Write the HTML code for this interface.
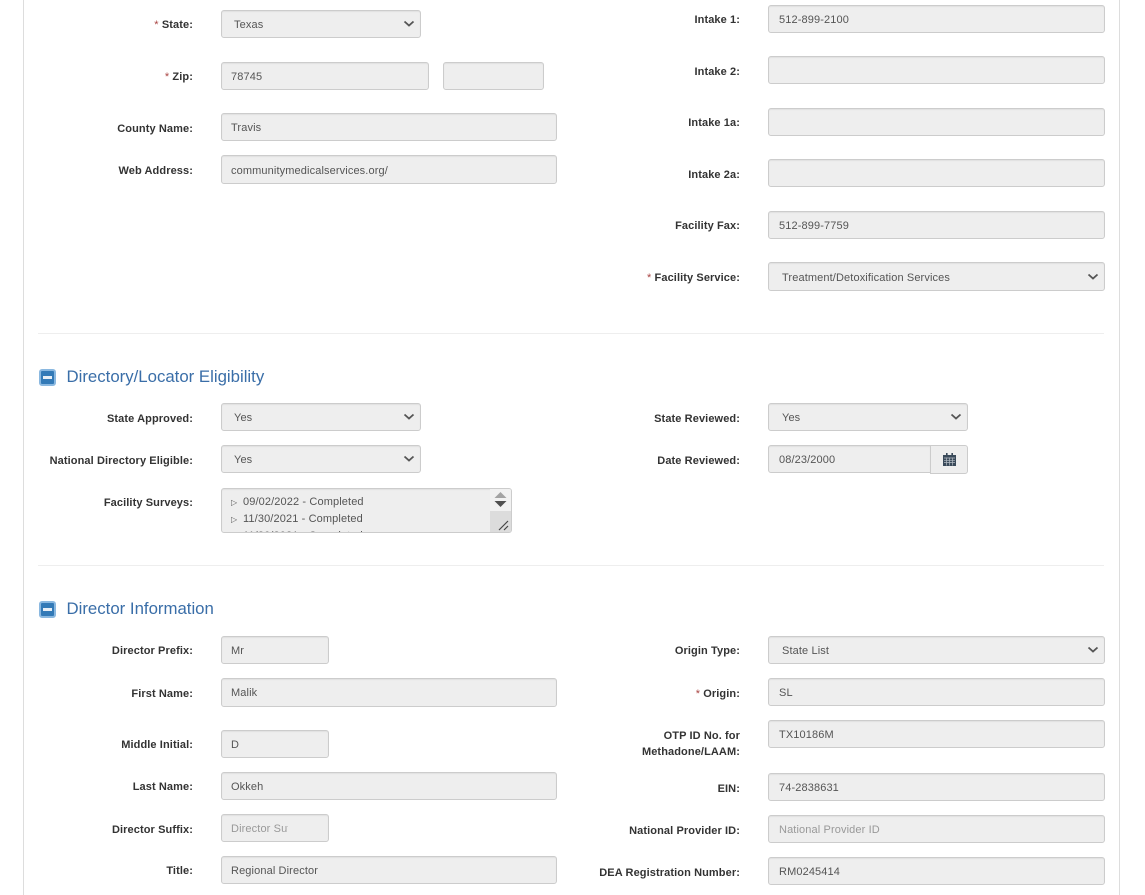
<!DOCTYPE html>
<html><head><meta charset="utf-8">
<style>
html,body{margin:0;padding:0;background:#fff;width:1145px;height:895px;overflow:hidden}
body{position:relative;font-family:"Liberation Sans",sans-serif;font-size:11px;color:#555;letter-spacing:.12px}
.p{position:absolute}
.f{position:absolute;box-sizing:border-box;background:#eee;border:1px solid #ccc;border-radius:3px;box-shadow:inset 0 1px 1px rgba(0,0,0,.06);padding-left:9px;padding-top:2px;color:#555;white-space:nowrap;overflow:hidden;display:flex;align-items:center}
.s{padding-left:12px}
.ph{color:#999}
.l{position:absolute;text-align:right;font-weight:bold;color:#333;white-space:nowrap;line-height:16px;transform:translateY(1px);letter-spacing:.1px}
.r{color:#a94442;font-weight:normal}
.hr{position:absolute;left:38px;width:1066px;height:1px;background:#eee}
.h{position:absolute;left:66.5px;font-size:16.8px;letter-spacing:0;color:#3a6ea8;line-height:20px;white-space:nowrap}
.ic{position:absolute;left:39px;width:17px;height:17px;box-sizing:border-box;background:#337ab7;border:2px solid #8ab8e0;border-radius:3px}
.ic:after{content:"";position:absolute;left:2px;top:5px;width:9px;height:3px;background:#e8eff6}
.c{position:absolute;right:5px;top:50%;margin-top:-4px}
</style></head><body>
<div class="p" style="left:23px;top:0;width:1px;height:895px;background:#ddd"></div>
<div class="p" style="left:1119px;top:0;width:1px;height:895px;background:#ddd"></div>

<div class="l" style="right:952px;top:16px"><span class="r">*</span> State:</div>
<div class="f s" style="left:221px;top:10px;width:200px;height:28px">Texas<svg class="c" width="12" height="8" viewBox="0 0 12 8"><path d="M1.5 1.5l4.500 4 4.500-4" fill="none" stroke="#555" stroke-width="1.800"/></svg></div>
<div class="l" style="right:952px;top:68px"><span class="r">*</span> Zip:</div>
<div class="f" style="left:221px;top:62px;width:208px;height:28px">78745</div>
<div class="f" style="left:443px;top:62px;width:101px;height:28px"></div>
<div class="l" style="right:952px;top:120px">County Name:</div>
<div class="f" style="left:221px;top:113px;width:336px;height:28px">Travis</div>
<div class="l" style="right:952px;top:162px">Web Address:</div>
<div class="f" style="left:221px;top:155px;width:336px;height:29px">communitymedicalservices.org/</div>

<div class="l" style="right:405px;top:11px">Intake 1:</div>
<div class="f" style="left:768px;top:5px;width:337px;height:28px;padding-left:10px">512-899-2100</div>
<div class="l" style="right:405px;top:63px">Intake 2:</div>
<div class="f" style="left:768px;top:56px;width:337px;height:28px"></div>
<div class="l" style="right:405px;top:114px">Intake 1a:</div>
<div class="f" style="left:768px;top:108px;width:337px;height:28px"></div>
<div class="l" style="right:405px;top:166px">Intake 2a:</div>
<div class="f" style="left:768px;top:159px;width:337px;height:28px"></div>
<div class="l" style="right:405px;top:217px">Facility Fax:</div>
<div class="f" style="left:768px;top:211px;width:337px;height:28px;padding-left:10px">512-899-7759</div>
<div class="l" style="right:405px;top:269px"><span class="r">*</span> Facility Service:</div>
<div class="f s" style="left:768px;top:262px;width:337px;height:29px;padding-left:13px">Treatment/Detoxification Services<svg class="c" width="12" height="8" viewBox="0 0 12 8"><path d="M1.5 1.5l4.500 4 4.500-4" fill="none" stroke="#555" stroke-width="1.800"/></svg></div>

<div class="hr" style="top:333px"></div>
<div class="ic" style="top:369px"></div>
<div class="h" style="top:367px">Directory/Locator Eligibility</div>

<div class="l" style="right:952px;top:410px">State Approved:</div>
<div class="f s" style="left:221px;top:403px;width:200px;height:28px">Yes<svg class="c" width="12" height="8" viewBox="0 0 12 8"><path d="M1.5 1.5l4.500 4 4.500-4" fill="none" stroke="#555" stroke-width="1.800"/></svg></div>
<div class="l" style="right:952px;top:452px">National Directory Eligible:</div>
<div class="f s" style="left:221px;top:445px;width:200px;height:28px">Yes<svg class="c" width="12" height="8" viewBox="0 0 12 8"><path d="M1.5 1.5l4.500 4 4.500-4" fill="none" stroke="#555" stroke-width="1.800"/></svg></div>
<div class="l" style="right:952px;top:494px">Facility Surveys:</div>
<div class="f" style="left:221px;top:488px;width:291px;height:45px;display:block;padding:0">
  <div class="p" style="left:9px;top:5px;line-height:17px;white-space:nowrap"><span style="font-size:8px;display:inline-block;width:12px">▷</span>09/02/2022 - Completed<br><span style="font-size:8px;display:inline-block;width:12px">▷</span>11/30/2021 - Completed<br><span style="font-size:8px;display:inline-block;width:12px">▷</span>11/30/2021 - Completed</div>
  <div class="p" style="right:0;top:0;width:21px;height:22px;background:#f1f1f1"></div>
  <div class="p" style="right:0;top:22px;width:21px;height:22px;background:#dcdcdc"></div>
  <svg class="p" style="right:0;top:0" width="21" height="44" viewBox="0 0 21 44"><path d="M4.500 9l6-6 6 6z" fill="#a3a3a3"/><path d="M4.500 12h12l-6 6z" fill="#505050"/><path d="M9 41l9-9M14 41l4-4" stroke="#444" stroke-width="1.200" fill="none"/></svg>
</div>

<div class="l" style="right:405px;top:410px">State Reviewed:</div>
<div class="f s" style="left:768px;top:403px;width:200px;height:28px;padding-left:13px">Yes<svg class="c" width="12" height="8" viewBox="0 0 12 8"><path d="M1.5 1.5l4.500 4 4.500-4" fill="none" stroke="#555" stroke-width="1.800"/></svg></div>
<div class="l" style="right:405px;top:452px">Date Reviewed:</div>
<div class="f" style="left:768px;top:445px;width:163px;height:28px;border-radius:3px 0 0 3px;padding-left:10px">08/23/2000</div>
<div class="p" style="left:930px;top:445px;width:38px;height:29px;box-sizing:border-box;background:#eee;border:1px solid #ccc;border-radius:0 3px 3px 0">
  <svg class="p" style="left:12px;top:7px" width="13" height="13" viewBox="0 0 13 13"><path d="M0 2h13v11H0z" fill="#3a4a5a"/><path d="M3 0h1.600v2.500H3zM8.400 0H10v2.500H8.400z" fill="#3a4a5a"/><path d="M1 5h11M1 7.300h11M1 9.600h11M3.500 4.500v8M6.500 4.500v8M9.500 4.500v8" stroke="#b5bcc4" stroke-width=".7"/></svg>
</div>

<div class="hr" style="top:565px"></div>
<div class="ic" style="top:601px"></div>
<div class="h" style="top:599px">Director Information</div>

<div class="l" style="right:952px;top:642px">Director Prefix:</div>
<div class="f" style="left:221px;top:636px;width:108px;height:28px">Mr</div>
<div class="l" style="right:952px;top:685px">First Name:</div>
<div class="f" style="left:221px;top:678px;width:336px;height:29px;padding-bottom:2px">Malik</div>
<div class="l" style="right:952px;top:736px">Middle Initial:</div>
<div class="f" style="left:221px;top:730px;width:108px;height:28px">D</div>
<div class="l" style="right:952px;top:778px">Last Name:</div>
<div class="f" style="left:221px;top:772px;width:336px;height:28px">Okkeh</div>
<div class="l" style="right:952px;top:821px">Director Suffix:</div>
<div class="f ph" style="left:221px;top:814px;width:108px;height:28px;padding-bottom:1px"><span style="display:block;width:57px;overflow:hidden">Director Suffix</span></div>
<div class="l" style="right:952px;top:862px">Title:</div>
<div class="f" style="left:221px;top:856px;width:336px;height:28px;padding-bottom:1px">Regional Director</div>

<div class="l" style="right:405px;top:642px">Origin Type:</div>
<div class="f s" style="left:768px;top:636px;width:337px;height:28px;padding-left:13px">State List<svg class="c" width="12" height="8" viewBox="0 0 12 8"><path d="M1.5 1.5l4.500 4 4.500-4" fill="none" stroke="#555" stroke-width="1.800"/></svg></div>
<div class="l" style="right:405px;top:685px"><span class="r">*</span> Origin:</div>
<div class="f" style="left:768px;top:678px;width:337px;height:28px;padding-left:10px">SL</div>
<div class="l" style="right:405px;top:727px">OTP ID No. for<br>Methadone/LAAM:</div>
<div class="f" style="left:768px;top:720px;width:337px;height:28px;padding-left:10px">TX10186M</div>
<div class="l" style="right:405px;top:780px">EIN:</div>
<div class="f" style="left:768px;top:773px;width:337px;height:28px;padding-left:10px">74-2838631</div>
<div class="l" style="right:405px;top:822px">National Provider ID:</div>
<div class="f ph" style="left:768px;top:815px;width:337px;height:28px;padding-left:10px">National Provider ID</div>
<div class="l" style="right:405px;top:864px">DEA Registration Number:</div>
<div class="f" style="left:768px;top:857px;width:337px;height:28px;padding-left:10px">RM0245414</div>
</body></html>
